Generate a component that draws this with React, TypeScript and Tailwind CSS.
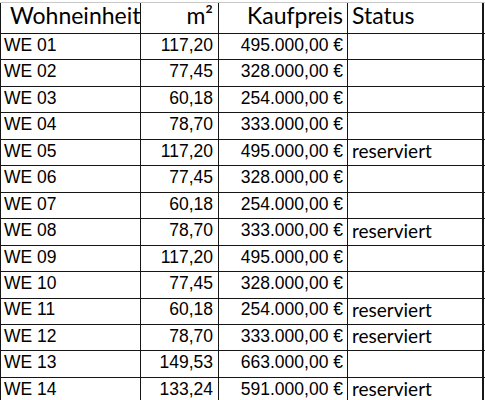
const rows = [
  ["WE 01", "117,20", "495.000,00 €", ""],
  ["WE 02", "77,45", "328.000,00 €", ""],
  ["WE 03", "60,18", "254.000,00 €", ""],
  ["WE 04", "78,70", "333.000,00 €", ""],
  ["WE 05", "117,20", "495.000,00 €", "reserviert"],
  ["WE 06", "77,45", "328.000,00 €", ""],
  ["WE 07", "60,18", "254.000,00 €", ""],
  ["WE 08", "78,70", "333.000,00 €", "reserviert"],
  ["WE 09", "117,20", "495.000,00 €", ""],
  ["WE 10", "77,45", "328.000,00 €", ""],
  ["WE 11", "60,18", "254.000,00 €", "reserviert"],
  ["WE 12", "78,70", "333.000,00 €", "reserviert"],
  ["WE 13", "149,53", "663.000,00 €", ""],
  ["WE 14", "133,24", "591.000,00 €", "reserviert"],
];

const calibri = "font-['Lato','Open_Sans',sans-serif]";
const arial = "font-['Liberation_Sans',Arial,sans-serif]";
const line = "border-[#161616]";

export default function App() {
  return (
    <div className="w-[485px] h-[400px] overflow-hidden bg-white text-black">
      <div className="h-[3px] border-b border-[#c8c8c8]" />
      {/* header */}
      <div className={`flex h-[31px] border-b ${line} ${calibri} text-[23px] leading-none`}>
        <div className={`w-[141px] border-r border-l ${line} flex items-end pb-[6px] pl-[9px]`}>Wohneinheit</div>
        <div className={`w-[78px] border-r ${line} flex items-end justify-end pb-[6px] pr-[5px]`}>m²</div>
        <div className={`w-[129px] border-r ${line} flex items-end justify-end pb-[6px] pr-[4px]`}>Kaufpreis</div>
        <div className={`w-[136px] border-r-2 ${line} flex items-end pb-[6px] pl-[4px]`}>Status</div>
      </div>
      {rows.map((r) => (
        <div key={r[0]} className={`flex h-[26.46px] border-b ${line} text-[17.5px] leading-none`}>
          <div className={`w-[141px] border-r border-l ${line} ${arial} flex items-end pb-[5px] pl-[3px]`}>{r[0]}</div>
          <div className={`w-[78px] border-r ${line} ${arial} flex items-end justify-end pb-[5px] pr-[5px]`}>{r[1]}</div>
          <div className={`w-[129px] border-r ${line} ${arial} flex items-end justify-end pb-[5px] pr-[4px]`}>{r[2]}</div>
          <div className={`w-[136px] border-r-2 ${line} ${calibri} text-[19px] flex items-end pb-[5px] pl-[4px]`}>{r[3]}</div>
        </div>
      ))}
    </div>
  );
}
